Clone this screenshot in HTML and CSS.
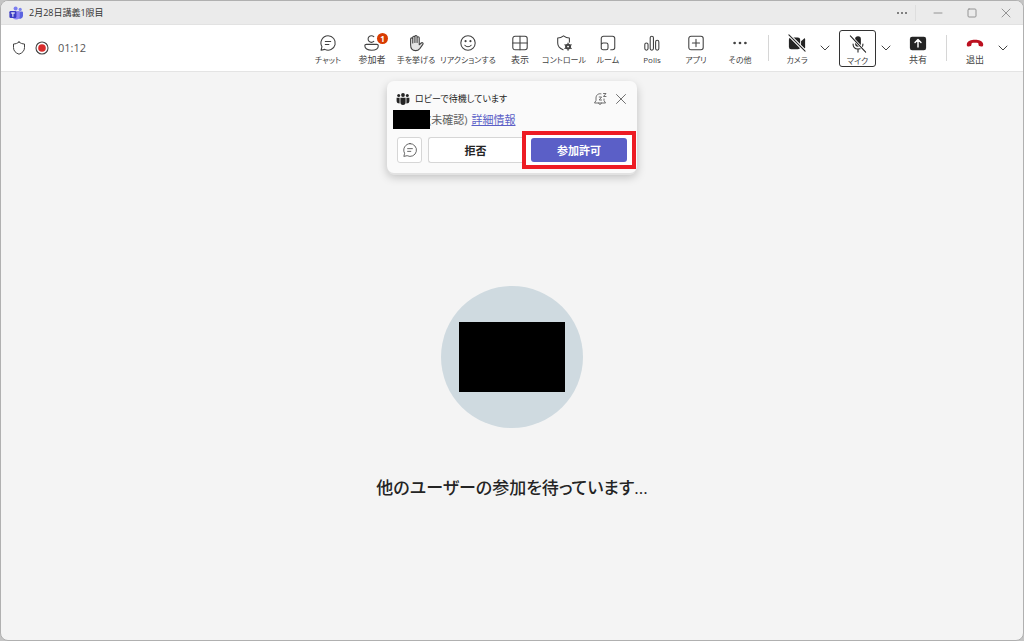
FILE: index.html
```html
<!DOCTYPE html>
<html lang="ja">
<head>
<meta charset="utf-8">
<meta name="viewport" content="width=device-width, initial-scale=1">
<title>2月28日講義1限目</title>
<link rel="stylesheet" href="styles.css">
</head>
<body>
<div class="window">
  <header class="titlebar">
    <svg class="app-logo" viewBox="0 0 14 14" aria-hidden="true">
      <circle cx="11.2" cy="3.4" r="1.6" fill="#7b83eb"/>
      <circle cx="6.6" cy="2.4" r="2" fill="#7b7df0"/>
      <path d="M8 5.500h5a1 1 0 0 1 1 1V10a3 3 0 0 1-5 2z" fill="#5b63e0"/>
      <path d="M3.600 5.300h6.200a1 1 0 0 1 1 1V10a3.600 3.600 0 0 1-7.200 0z" fill="#8a80f2"/>
      <rect x="0.4" y="5" width="7" height="7" rx="1.2" fill="#3b3bc4"/>
      <path d="M2.300 7h3.200M3.900 7v3.400" stroke="#fff" stroke-width="1"/>
    </svg>
    <h1 class="title">2月28日講義1限目</h1>
    <div class="window-controls">
      <button class="win-btn more" aria-label="その他のオプション"><svg viewBox="0 0 12 12"><g fill="#5c5c5c"><circle cx="2" cy="6" r="1"/><circle cx="6" cy="6" r="1"/><circle cx="10" cy="6" r="1"/></g></svg></button>
      <button class="win-btn" aria-label="最小化"><svg viewBox="0 0 12 12"><path d="M2 6h8"/></svg></button>
      <button class="win-btn" aria-label="最大化"><svg viewBox="0 0 12 12"><rect x="2" y="2" width="8" height="8" rx="1"/></svg></button>
      <button class="win-btn" aria-label="閉じる"><svg viewBox="0 0 12 12"><path d="M2 2l8 8M10 2l-8 8"/></svg></button>
    </div>
  </header>

  <div class="toolbar">
    <div class="status">
      <svg class="shield" viewBox="0 0 14 14"><path d="M7 1C5.400 2.300 3.500 3 1.500 3v3.600C1.500 9.800 3.600 12 7 13.200c3.400-1.200 5.500-3.400 5.500-6.600V3C10.500 3 8.600 2.300 7 1z"/></svg>
      <svg class="record" viewBox="0 0 14 14"><circle cx="7" cy="7" r="6" fill="#fff" stroke="#444" stroke-width="1.100"/><circle cx="7" cy="7" r="3.800" fill="#d92c2c" stroke="none"/></svg>
      <span class="timer">01:12</span>
    </div>
    <nav class="tools">
      <button class="tool kana"><svg viewBox="0 0 20 20"><path d="M10 2a8 8 0 1 1-3.600 15.100L2.300 18l1-3.900A8 8 0 0 1 10 2zM7 8.300h6M7 11.700h4"/></svg><span>チャット</span></button>
      <button class="tool"><svg viewBox="0 0 20 20"><path d="M12 8.200A3.700 3.700 0 1 1 12 3M3.700 11.500h11.600c1 0 1.700.7 1.700 1.500 0 3-3 5-7.500 5S2 16 2 13c0-.8.7-1.500 1.700-1.500z"/></svg><span>参加者</span><b class="badge">1</b></button>
      <button class="tool kana"><svg viewBox="0 0 20 20"><path d="M4 12V5.500a1.200 1.200 0 0 1 2.400 0V10 3.700a1.200 1.200 0 0 1 2.400 0V9.500 2.800a1.200 1.200 0 0 1 2.400 0V9.500 4.200a1.200 1.200 0 0 1 2.400 0V12l2.200-2c1.200-1 2.800.3 1.800 1.500l-3.400 4.700C13.200 17.500 12 18.500 9.500 18.500 6 18.500 4 16 4 12z" fill="#e4e4e4"/></svg><span>手を挙げる</span></button>
      <button class="tool wide kana"><svg viewBox="0 0 20 20"><circle cx="10" cy="10" r="8"/><path d="M6.500 12.500c1.800 2.200 5.200 2.200 7 0"/><g fill="#424242" stroke="none"><circle cx="7.300" cy="8" r="1.200"/><circle cx="12.700" cy="8" r="1.200"/></g></svg><span>リアクションする</span></button>
      <button class="tool"><svg viewBox="0 0 20 20"><rect x="2" y="2.500" width="16" height="15" rx="2.500"/><path d="M10 2.500v15M2 10h16"/></svg><span>表示</span></button>
      <button class="tool kana"><svg viewBox="0 0 20 20"><path d="M9 17.500C5.200 16 3 13.500 3 10V4.500C5.500 4.400 7.600 3.500 9.500 2c1.900 1.500 4 2.400 6.500 2.500V9"/><circle cx="14.500" cy="14" r="2.200" stroke-width="2.200"/><path d="M14.500 10v8M11 12l7 4M11 16l7-4" stroke-width="1.300"/><circle cx="14.500" cy="14" r="1" fill="#fff" stroke="none"/></svg><span>コントロール</span></button>
      <button class="tool kana"><svg viewBox="0 0 20 20"><path d="M2.500 7V5A2.500 2.500 0 0 1 5 2.500h10A2.500 2.500 0 0 1 17.500 5v10a2.500 2.500 0 0 1-2.500 2.500h-2M2.500 12a2 2 0 0 1 2-2H8a2 2 0 0 1 2 2v3.500a2 2 0 0 1-2 2H4.500a2 2 0 0 1-2-2zM2.500 12V7"/></svg><span>ルーム</span></button>
      <button class="tool kana"><svg viewBox="0 0 20 20"><rect x="2" y="10" width="3.600" height="8" rx="1.800"/><rect x="8" y="2.500" width="3.600" height="15.500" rx="1.800"/><rect x="14" y="7" width="3.600" height="11" rx="1.800"/></svg><span>Polls</span></button>
      <button class="tool kana"><svg viewBox="0 0 20 20"><rect x="2" y="2.500" width="16" height="15" rx="2.500"/><path d="M10 6v8M6 10h8"/></svg><span>アプリ</span></button>
      <button class="tool kana"><svg viewBox="0 0 20 20"><g fill="#424242" stroke="none"><circle cx="4" cy="10" r="1.500"/><circle cx="10" cy="10" r="1.500"/><circle cx="16" cy="10" r="1.500"/></g></svg><span>その他</span></button>
      <i class="divider"></i>
      <button class="tool dark kana"><svg viewBox="0 0 20 20"><g fill="#242424" stroke="none"><rect x="1" y="4" width="12.500" height="13" rx="2.500"/><path d="M14.500 8l3.500-3c.5-.4 1 0 1 .5v10c0 .5-.5.900-1 .5l-3.500-3z"/></g><path d="M1 1l18 18" stroke="#fff" stroke-width="3.500"/><path d="M1 1l18 18" stroke="#242424"/></svg><span>カメラ</span></button>
      <button class="chevron" aria-label="カメラのオプション"><svg viewBox="0 0 10 10"><path d="M1 3l4 4 4-4"/></svg></button>
      <button class="tool dark focused kana"><svg viewBox="0 0 20 20"><rect x="6.800" y="1.500" width="6.400" height="11.500" rx="3.200" fill="#242424" stroke="none"/><path d="M4.500 10c0 3.500 2.400 5.500 5.500 5.500s5.500-2 5.500-5.500M10 15.500V19"/><path d="M1.500 1l17 18" stroke="#fff" stroke-width="3"/><path d="M1.500 1l17 18"/></svg><span>マイク</span></button>
      <button class="chevron" aria-label="マイクのオプション"><svg viewBox="0 0 10 10"><path d="M1 3l4 4 4-4"/></svg></button>
      <button class="tool dark"><svg viewBox="0 0 20 20"><rect x="1" y="3" width="18" height="15" rx="2.500" fill="#242424" stroke="none"/><path d="M10 14.500V7M6.700 9.500L10 6.200l3.300 3.300" stroke="#fff" stroke-width="1.600"/></svg><span>共有</span></button>
      <i class="divider"></i>
      <button class="tool dark"><svg viewBox="0 0 20 20"><path d="M10 6.500c4.500 0 8.300 1.400 9 4.300.3 1.300 0 2.500-.4 2.900-.5.500-3.700-.2-4.300-.7-.6-.6-.2-2.300-.7-2.700-.8-.6-6.400-.6-7.200 0-.5.400-.1 2.100-.7 2.700-.6.500-3.800 1.200-4.300.7-.4-.4-.7-1.600-.4-2.900.7-2.900 4.500-4.300 9-4.300z" fill="#bc1020" stroke="none"/></svg><span>退出</span></button>
      <button class="chevron" aria-label="退出のオプション"><svg viewBox="0 0 10 10"><path d="M1 3l4 4 4-4"/></svg></button>
    </nav>
  </div>

  <main class="stage">
    <div class="avatar"><div class="redacted-name"></div></div>
    <p class="waiting">他のユーザーの参加を待っています...</p>

    <section class="lobby">
      <div class="lobby-head">
        <svg class="people" viewBox="0 0 14 12"><g fill="#242424"><circle cx="7" cy="2" r="1.900"/><circle cx="2.700" cy="2.400" r="1.500"/><circle cx="11.300" cy="2.400" r="1.500"/><path d="M4.400 4.800h5.200v4.500a2.600 2.600 0 0 1-5.200 0zM.6 4.800h3v5.700C1.800 10.500.6 9.700.6 8zM13.400 4.800h-3v5.700c1.800 0 3-.8 3-2.500z"/></g></svg>
        <h2>ロビーで待機しています</h2>
        <button class="plain" aria-label="通知をスヌーズ"><svg viewBox="0 0 14 14"><path d="M8 1.800C5 1.200 3 3.300 3 6v2.500L1.500 11h11L11 8.500V7M5.500 11c.3 2 2.700 2 3 0M6.200 5h2.400L6.200 8h2.400M10.500 1.500h2.500l-2.500 3H13"/></svg></button>
        <button class="plain" aria-label="閉じる"><svg viewBox="0 0 14 14"><path d="M2.500 2.500l9 9M11.500 2.500l-9 9"/></svg></button>
      </div>
      <div class="lobby-user"><span class="redacted-user"></span><span class="unverified">(未確認)</span><a href="#">詳細情報</a></div>
      <div class="lobby-actions">
        <button class="chat" aria-label="チャット"><svg viewBox="0 0 20 20"><path d="M10 2a8 8 0 1 1-3.600 15.100L2.300 18l1-3.900A8 8 0 0 1 10 2zM7 8.300h6M7 11.700h4"/></svg></button>
        <button class="deny">拒否</button>
        <div class="highlight"><button class="admit">参加許可</button></div>
      </div>
    </section>
  </main>
</div>
</body>
</html>
```
FILE: styles.css
```css
* { box-sizing: border-box; }

body {
  margin: 0;
  background: #c4c4c4;
  color: #242424;
  font-family: "Open Sans", "Noto Sans CJK JP", sans-serif;
  font-feature-settings: "palt";
}

h1, h2, p { margin: 0; font-weight: 400; }

button {
  margin: 0;
  padding: 0;
  border: 0;
  background: none;
  color: inherit;
  font: inherit;
  font-feature-settings: inherit;
}

svg {
  display: block;
  flex: none;
  fill: none;
  stroke: #424242;
  stroke-linecap: round;
  stroke-linejoin: round;
}

.window {
  display: flex;
  flex-direction: column;
  min-height: 100vh;
  border: 1px solid #b0b0b0;
  border-radius: 8px;
  background: #f4f4f4;
  overflow: hidden;
}

.titlebar {
  display: flex;
  align-items: center;
  height: 24px;
  padding-left: 8px;
  border-bottom: 1px solid #e2e2e2;
  background: #ebebeb;
}
.app-logo { width: 14px; height: 14px; stroke: none; }
.title { margin-left: 6px; font-size: 9px; line-height: 16px; color: #333; }
.window-controls { display: flex; align-items: center; margin-left: auto; }
.win-btn { display: grid; place-items: center; width: 34px; height: 16px; }
.win-btn svg { width: 12px; height: 12px; stroke: #949494; }
.win-btn.more { width: 27px; border-right: 1px solid #dedede; margin-right: 5px; }
.win-btn.more svg { stroke: none; }

.toolbar {
  display: flex;
  align-items: center;
  justify-content: space-between;
  height: 47px;
  padding: 0 14px 0 11px;
  border-bottom: 1px solid #e4e4e4;
  background: #fff;
}
.status { display: flex; align-items: center; gap: 9px; }
.shield, .record { width: 14px; height: 14px; }
.timer { font-size: 11px; line-height: 16px; color: #555; }

.tools { display: flex; align-items: center; }
.tool {
  position: relative;
  display: flex;
  flex-direction: column;
  align-items: center;
  gap: 1px;
  width: 44px;
  height: 36px;
  padding-top: 4px;
  font-size: 9px;
  line-height: 14px;
  white-space: nowrap;
  color: #424242;
}
.tool.wide { width: 60px; }
.tool.kana { font-size: 8px; }
.tool svg { width: 18px; height: 18px; stroke-width: 1.2; }
.tool.dark svg { stroke: #242424; }
.tool.focused {
  width: 37px;
  height: 37px;
  margin: 0 4px 0 8px;
  border: 1px solid #333;
  border-radius: 3px;
}
.focused + .chevron { margin-right: 4px; }
.badge {
  position: absolute;
  top: 3px;
  right: 6px;
  width: 11px;
  height: 11px;
  border-radius: 50%;
  background: #d83b01;
  color: #fff;
  font-size: 8px;
  line-height: 11px;
  text-align: center;
}
.divider { width: 1px; height: 26px; margin: 0 6px; background: #d6d6d6; }
.chevron { display: grid; place-items: center; width: 12px; height: 36px; }
.chevron svg { width: 10px; height: 10px; }

.stage {
  position: relative;
  display: flex;
  flex: 1;
  flex-direction: column;
  align-items: center;
  justify-content: center;
  gap: 44px;
  padding-top: 78px;
}
.avatar {
  display: grid;
  place-items: center;
  width: 142px;
  height: 142px;
  border-radius: 50%;
  background: #cfdae0;
}
.redacted-name { width: 106px; height: 70px; background: #000; }
.waiting { font-size: 17px; line-height: 32px; font-weight: 500; }

.lobby {
  position: absolute;
  top: 9px;
  left: 50%;
  width: 250px;
  margin-left: -125px;
  border-radius: 7px;
  background: #fafafa;
  box-shadow: 0 3px 0 -1px #e2e2e2, 0 4px 10px rgba(0, 0, 0, 0.22);
}
.lobby-head { display: flex; align-items: center; height: 27px; padding: 8px 9px 0 9px; }
.people { width: 14px; height: 12px; stroke: none; }
.lobby-head h2 { margin: 0 auto 0 5px; font-size: 9px; line-height: 16px; }
.plain { margin-left: 7px; }
.plain svg { width: 14px; height: 14px; stroke: #616161; stroke-width: 0.9; }

.lobby-user {
  display: flex;
  align-items: center;
  height: 23px;
  padding-left: 6px;
  font-size: 11px;
  line-height: 18px;
  color: #616161;
}
.redacted-user { z-index: 1; width: 37px; height: 19px; background: #000; }
.unverified { margin-left: -2px; }
.lobby-user a { margin-left: 4px; color: #5b5fc7; }

.lobby-actions { display: flex; align-items: center; height: 38px; margin-bottom: 4px; padding: 0 1px 0 10px; }
.chat, .deny { height: 26px; border: 1px solid #d6d6d6; border-radius: 3px; background: #fff; }
.chat { display: grid; place-items: center; width: 25px; margin-right: 6px; }
.chat svg { width: 16px; height: 16px; }
.deny { flex: 1; border-right: 0; border-radius: 3px 0 0 3px; font-size: 11px; font-weight: 600; }
.highlight { padding: 3px 5px; border: 4px solid #ed1c24; background: #fff; }
.admit {
  display: block;
  width: 96px;
  height: 24px;
  border-radius: 3px;
  background: #5b5fc7;
  color: #fff;
  font-size: 11px;
  font-weight: 600;
}
```
